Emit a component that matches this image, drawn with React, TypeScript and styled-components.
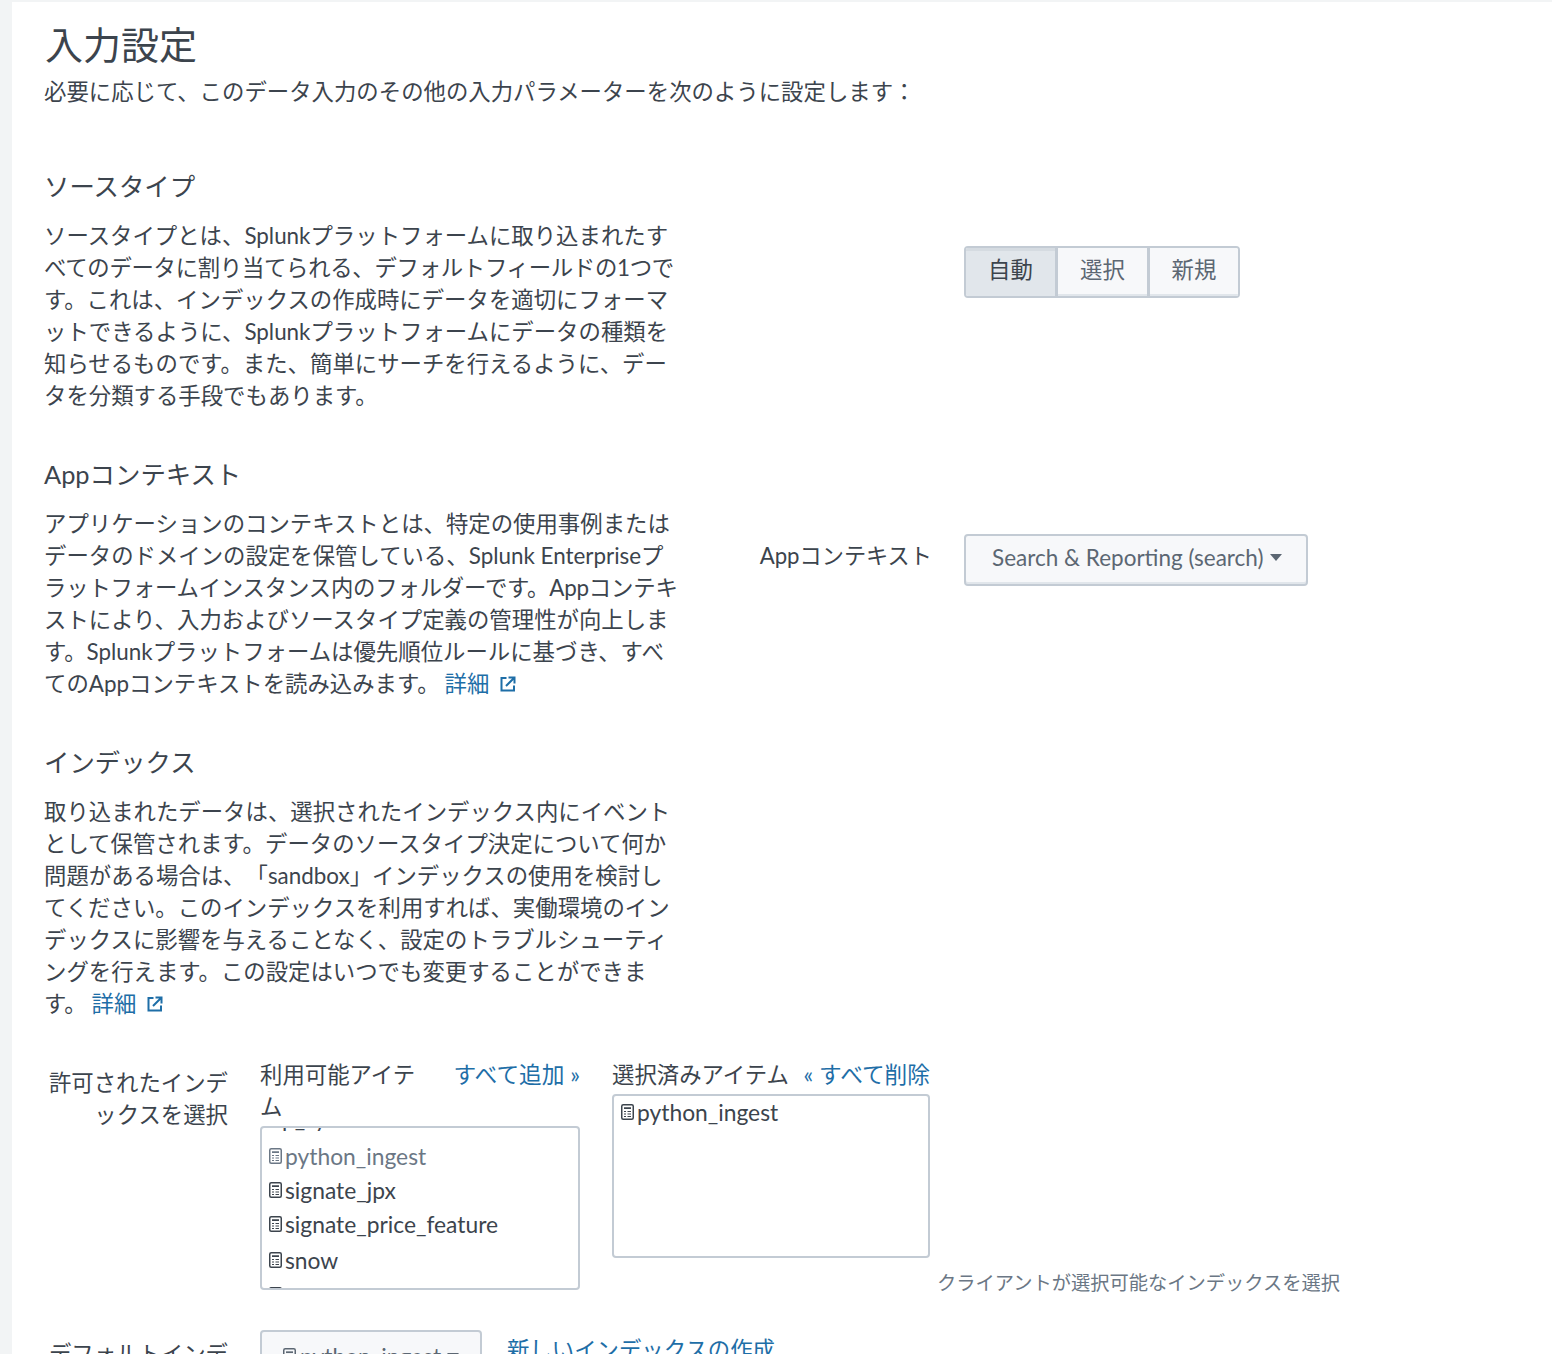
import React from "react";
import styled, { createGlobalStyle } from "styled-components";

const Global = createGlobalStyle`
  html, body { margin: 0; padding: 0; background: #f2f4f5; height: 1354px; overflow: hidden; }
  body {
    font-family: Lato, "Noto Sans CJK JP", "Liberation Sans", sans-serif;
    color: #3c444d;
    text-spacing-trim: space-all;
  }
`;

const Panel = styled.main`
  margin: 2px 0 0 12px;
  height: 1352px;
  overflow: hidden;
  background: #fff;
  padding: 17px 0 0 32px;
  box-sizing: border-box;
`;
const Title = styled.h1`
  margin: 0 0 7px 1px;
  font-size: 38px;
  line-height: 50px;
  font-weight: 400;
`;
const Subtitle = styled.p`
  margin: 0 0 61px;
  font-size: 22.4px;
  line-height: 32px;
  white-space: nowrap;
`;
const Section = styled.section<{ $gap: number }>`
  display: grid;
  grid-template-columns: 670px 216px auto;
  column-gap: 0;
  margin-bottom: ${(p) => p.$gap}px;
`;
const Copy = styled.div`
  grid-column: 1;
`;
const Heading = styled.h2`
  margin: 0 0 17px;
  font-size: 25.4px;
  line-height: 34px;
  font-weight: 400;
`;
const Para = styled.p`
  margin: 0;
  font-size: 22.4px;
  line-height: 32px;
  white-space: nowrap;
`;
const TightLine = styled.span<{ $track: number }>`
  letter-spacing: ${(p) => p.$track}px;
`;
const Link = styled.a`
  color: #1e6ea7;
  text-decoration: none;
  font-size: 22.4px;
  line-height: 32px;
`;
const PickerLink = styled(Link)`
  font-size: 22.7px;
`;
const DetailLink = styled(Link)`
  margin-left: 5px;
  display: inline-flex;
  align-items: center;
  gap: 11px;
`;
const ControlLabel = styled.div`
  grid-column: 2;
  justify-self: end;
  margin-right: -2px;
  font-size: 22.2px;
  line-height: 32px;
  margin-top: 83px;
  white-space: nowrap;
`;
const Control = styled.div<{ $top: number }>`
  grid-column: 3;
  margin-left: 34px;
  margin-top: ${(p) => p.$top}px;
`;
const ButtonGroup = styled.div`
  display: inline-flex;
  border: 2px solid #c3cbd4;
  border-radius: 4px;
  overflow: hidden;
`;
const GroupButton = styled.button<{ $active?: boolean; $w: number }>`
  all: unset;
  box-sizing: border-box;
  width: ${(p) => p.$w}px;
  height: 48px;
  padding-bottom: 8px;
  text-align: center;
  font-size: 22.4px;
  color: ${(p) => (p.$active ? "#3c444d" : "#5c6773")};
  background: ${(p) => (p.$active ? "#e1e6eb" : "#f7f8fa")};
  border-left: ${(p) => (p.$active ? "none" : "3px solid #c3cbd4")};
  box-shadow: ${(p) => (p.$active ? "inset 0 3px 0 #d5dbe1" : "inset 0 -2px 0 #e1e6eb")};
`;
const Dropdown = styled.button`
  all: unset;
  box-sizing: border-box;
  display: inline-flex;
  align-items: center;
  gap: 6px;
  height: 52px;
  padding: 0 24px 5px 26px;
  border: 2px solid #c3cbd4;
  border-radius: 4px;
  background: #f7f8fa;
  color: #5c6773;
  font-size: 22.5px;
  box-shadow: inset 0 -2px 0 #e1e6eb;
  white-space: nowrap;
`;
const Caret = styled.span`
  width: 0;
  height: 0;
  border-left: 6px solid transparent;
  border-right: 6px solid transparent;
  border-top: 7px solid #5c6773;
`;
const FormRow = styled.div<{ $gap?: number }>`
  display: grid;
  grid-template-columns: 184px 320px 318px auto;
  column-gap: 32px;
  align-items: start;
  margin-bottom: ${(p) => p.$gap ?? 0}px;
`;
const FormLabel = styled.div`
  font-size: 22.4px;
  line-height: 32px;
  text-align: right;
  margin-top: 8px;
  white-space: nowrap;
`;
const Picker = styled.div`
  position: relative;
`;
const PickerHead = styled.div`
  display: flex;
  justify-content: space-between;
  align-items: flex-start;
  font-size: 22.4px;
  line-height: 32px;
`;
const PickerTitle = styled.span`
  width: 170px;
`;
const ListBox = styled.div`
  box-sizing: border-box;
  width: 100%;
  height: 164px;
  margin-top: 3px;
  border: 2px solid #c3cbd4;
  border-radius: 4px;
  overflow: hidden;
  background: #fff;
  padding: 0 7px;
`;
const ListInner = styled.div<{ $shift: number }>`
  margin-top: ${(p) => p.$shift}px;
`;
const Item = styled.div<{ $muted?: boolean; $h?: number }>`
  display: flex;
  align-items: center;
  gap: 3px;
  height: ${(p) => p.$h ?? 34}px;
  font-size: 22.8px;
  line-height: 32px;
  white-space: nowrap;
  color: ${(p) => (p.$muted ? "#6b7785" : "#3c444d")};
`;
const Help = styled.div`
  grid-column: 4;
  align-self: end;
  margin: 0 0 -6px -25px;
  font-size: 19.25px;
  line-height: 26px;
  color: #6b7785;
  white-space: nowrap;
`;
const DefaultControls = styled.div`
  grid-column: 2 / span 3;
  display: flex;
  align-items: flex-start;
  gap: 25px;
`;
const SelectButton = styled(Dropdown)`
  width: 222px;
  height: 52px;
  padding: 0 0 0 21px;
  gap: 4px;
  font-size: 22.8px;
`;
const SelectCaret = styled(Caret)`
  margin-left: 2px;
`;
const InlineCreate = styled(Link)`
  margin-top: 4px;
  white-space: nowrap;
`;

const IndexIcon = () => (
  <svg width="13" height="16" viewBox="0 0 13 16" fill="none" stroke="currentColor" style={{ flex: "none" }}>
    <rect x="0.75" y="0.75" width="11.5" height="14.5" rx="1.5" strokeWidth="1.5" />
    <path d="M3 4.2h7" strokeWidth="1.7" />
    <path d="M3 7.5h2M6.5 7.5h3.5M3 10h2M6.5 10h3.5M3 12.5h2M6.5 12.5h3.5" strokeWidth="1.2" />
  </svg>
);

const ExternalIcon = () => (
  <svg width="16" height="16" viewBox="0 0 16 16" fill="none" stroke="currentColor" strokeWidth="2">
    <path d="M6.5 2H1.5v12.5H14V9.5" />
    <path d="M6 10l8-8M8.5 1.5h6v6" />
  </svg>
);

const Lines = ({ lines }: { lines: React.ReactNode[] }) => (
  <>
    {lines.map((l, i) => (
      <React.Fragment key={i}>
        {l}
        {i < lines.length - 1 && <br />}
      </React.Fragment>
    ))}
  </>
);

export default function App() {
  return (
    <Panel>
      <Global />
      <Title>入力設定</Title>
      <Subtitle>必要に応じて、このデータ入力のその他の入力パラメーターを次のように設定します：</Subtitle>

      <Section $gap={45}>
        <Copy>
          <Heading>ソースタイプ</Heading>
          <Para>
            <Lines
              lines={[
                "ソースタイプとは、Splunkプラットフォームに取り込まれたす",
                <TightLine $track={-0.3}>べてのデータに割り当てられる、デフォルトフィールドの1つで</TightLine>,
                "す。これは、インデックスの作成時にデータを適切にフォーマ",
                "ットできるように、Splunkプラットフォームにデータの種類を",
                "知らせるものです。また、簡単にサーチを行えるように、デー",
                "タを分類する手段でもあります。",
              ]}
            />
          </Para>
        </Copy>
        <Control $top={77}>
          <ButtonGroup>
            <GroupButton $active $w={89}>自動</GroupButton>
            <GroupButton $w={92}>選択</GroupButton>
            <GroupButton $w={91}>新規</GroupButton>
          </ButtonGroup>
        </Control>
      </Section>

      <Section $gap={45}>
        <Copy>
          <Heading>Appコンテキスト</Heading>
          <Para>
            <Lines
              lines={[
                "アプリケーションのコンテキストとは、特定の使用事例または",
                "データのドメインの設定を保管している、Splunk Enterpriseプ",
                <TightLine $track={-0.2}>ラットフォームインスタンス内のフォルダーです。Appコンテキ</TightLine>,
                "ストにより、入力およびソースタイプ定義の管理性が向上しま",
                "す。Splunkプラットフォームは優先順位ルールに基づき、すべ",
                "てのAppコンテキストを読み込みます。",
              ]}
            />
            <DetailLink href="#">
              詳細
              <ExternalIcon />
            </DetailLink>
          </Para>
        </Copy>
        <ControlLabel>Appコンテキスト</ControlLabel>
        <Control $top={77}>
          <Dropdown>
            Search &amp; Reporting (search)
            <Caret />
          </Dropdown>
        </Control>
      </Section>

      <Section $gap={39}>
        <Copy>
          <Heading>インデックス</Heading>
          <Para>
            <Lines
              lines={[
                "取り込まれたデータは、選択されたインデックス内にイベント",
                "として保管されます。データのソースタイプ決定について何か",
                "問題がある場合は、「sandbox」インデックスの使用を検討し",
                "てください。このインデックスを利用すれば、実働環境のイン",
                "デックスに影響を与えることなく、設定のトラブルシューティ",
                "ングを行えます。この設定はいつでも変更することができま",
                "す。",
              ]}
            />
            <DetailLink href="#">
              詳細
              <ExternalIcon />
            </DetailLink>
          </Para>
        </Copy>
      </Section>

      <FormRow $gap={40}>
        <FormLabel>
          許可されたインデ
          <br />
          ックスを選択
        </FormLabel>
        <Picker>
          <PickerHead>
            <PickerTitle>利用可能アイテム</PickerTitle>
            <PickerLink href="#">すべて追加 »</PickerLink>
          </PickerHead>
          <ListBox>
            <ListInner $shift={-31}>
              <Item $h={42}>op_sys</Item>
              <Item $muted>
                <IndexIcon />
                python_ingest
              </Item>
              <Item>
                <IndexIcon />
                signate_jpx
              </Item>
              <Item>
                <IndexIcon />
                signate_price_feature
              </Item>
              <Item $h={37}>
                <IndexIcon />
                snow
              </Item>
              <Item>
                <IndexIcon />
                summary
              </Item>
            </ListInner>
          </ListBox>
        </Picker>
        <Picker>
          <PickerHead>
            <span>選択済みアイテム</span>
            <PickerLink href="#">« すべて削除</PickerLink>
          </PickerHead>
          <ListBox>
            <ListInner $shift={-1}>
              <Item>
                <IndexIcon />
                python_ingest
              </Item>
            </ListInner>
          </ListBox>
        </Picker>
        <Help>クライアントが選択可能なインデックスを選択</Help>
      </FormRow>

      <FormRow>
        <FormLabel>デフォルトインデ</FormLabel>
        <DefaultControls>
          <SelectButton>
            <IndexIcon />
            python_ingest
            <SelectCaret />
          </SelectButton>
          <InlineCreate href="#">新しいインデックスの作成</InlineCreate>
        </DefaultControls>
      </FormRow>
    </Panel>
  );
}
